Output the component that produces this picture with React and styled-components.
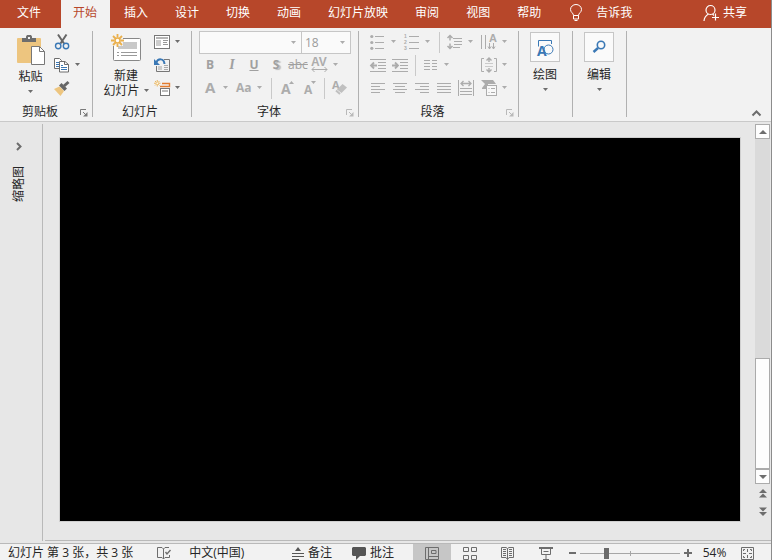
import React, { useState } from 'react'
import styled, { createGlobalStyle } from 'styled-components'

const accent = '#b7472a'
const blue = '#3a78b5'
const dark = '#6d6d6d'
const pale = '#acacac'

const GlobalStyle = createGlobalStyle`
    * {
        box-sizing: border-box;
    }
    body {
        margin: 0;
        font-family: "Open Sans", "Noto Sans CJK SC", sans-serif;
        font-size: 12px;
        line-height: 16px;
        color: #262626;
    }
    button, input, select {
        font: inherit;
        color: inherit;
        padding: 0;
        margin: 0;
        border: none;
        background: none;
    }
    svg {
        display: block;
        flex: none;
        overflow: visible;
    }
`

const Window = styled.div`
    display: flex;
    flex-direction: column;
    height: 100vh;
    overflow: hidden;
    background-color: #e7e7e7;
    border-right: 1px solid #8c8c8c;
`

/* tabs */
const TabBar = styled.nav`
    display: flex;
    flex: none;
    height: 28px;
    background-color: ${accent};
`
const Tab = styled.button`
    height: 28px;
    padding: 0 13px 3px ${({ $active }) => ($active ? 12 : 13)}px;
    margin-left: ${({ $active }) => ($active ? 1 : 0)}px;
    margin-right: 1px;
    white-space: nowrap;
    color: ${({ $active }) => ($active ? accent : '#fff')};
    background-color: ${({ $active }) => ($active ? '#f2f2f2' : 'transparent')};
`
const FileTab = styled(Tab)`
    padding: 0 19px 3px 17px;
    margin-right: 0;
`
const TabAction = styled(Tab)`
    display: flex;
    align-items: center;
    gap: ${({ $gap }) => $gap}px;
    padding-left: 15px;
`
const ShareTab = styled(TabAction)`
    margin-left: auto;
    padding-right: 23px;
`

/* ribbon */
const RibbonBar = styled.div`
    display: flex;
    flex: none;
    padding: 3px 0 4px;
    background-color: #f2f2f2;
    border-bottom: 1px solid #c9c9c9;
`
const Group = styled.section`
    display: flex;
    flex-direction: column;
    height: 86px;
    border-right: 1px solid #b1b1b1;
`
const GroupBody = styled.div`
    display: flex;
    flex: 1;
    padding: 0 ${({ $right = 7 }) => $right}px 0 ${({ $left = 7 }) => $left}px;
`
const GroupFoot = styled.div`
    display: flex;
    align-items: flex-end;
    height: 14px;
    padding-right: 4px;
`
const GroupLabel = styled.span`
    flex: 1;
    height: 14px;
    line-height: 18px;
    text-align: center;
`
const Rows = styled.div`
    display: flex;
    flex-direction: column;
`
const Row = styled.div`
    display: flex;
    align-items: center;
    height: 23px;
`
const Divider = styled.span`
    width: 1px;
    height: 21px;
    margin: 0 4px;
    background-color: #c9c9c9;
`
const Tool = styled.button`
    display: flex;
    align-items: center;
    gap: 5px;
    height: 22px;
    width: ${({ $drop }) => ($drop ? 34 : 22)}px;
    padding: 0 0 2px 3px;
    margin-left: ${({ $push }) => ($push ? 'auto' : 0)};
    color: ${({ disabled }) => (disabled ? pale : dark)};
`
const Letter = styled.button`
    width: 22px;
    height: 22px;
    padding-bottom: 2px;
    line-height: 20px;
    text-align: center;
    color: #a0a0a0;
    font-weight: ${({ $bold }) => ($bold ? 700 : 400)};
    font-style: ${({ $italic }) => ($italic ? 'italic' : 'normal')};
    font-family: ${({ $serif }) => ($serif ? '"Liberation Serif", serif' : 'inherit')};
    font-size: ${({ $size = 12 }) => $size}px;
    text-decoration: ${({ $line = 'none' }) => $line};
    text-shadow: ${({ $shadow }) => ($shadow ? '2px 1px 1px #bbb' : 'none')};
`
const BigTool = styled.button`
    display: flex;
    flex-direction: column;
    align-items: center;
    width: ${({ $width }) => $width}px;
    padding-top: ${({ $top = 4 }) => $top}px;
    line-height: 15px;

    > svg {
        margin-bottom: ${({ $gap = 3 }) => $gap}px;
    }
`
const CaretRow = styled.span`
    display: flex;
    align-items: center;
    justify-content: center;
    gap: 4px;
    height: 15px;
    white-space: nowrap;

    svg {
        color: ${dark};
    }
`
const IconFrame = styled.span`
    display: flex;
    align-items: center;
    justify-content: center;
    width: 30px;
    height: 30px;
    margin-bottom: 5px;
    border: 1px solid #c6c6c6;
    background-color: #fafafa;
`
const Combo = styled.div`
    display: flex;
    align-items: center;
    width: ${({ $width }) => $width}px;
    height: 23px;
    padding-right: 5px;
    margin-left: ${({ $joined }) => ($joined ? -1 : 0)}px;
    border: 1px solid #c6c6c6;
    background-color: #fafafa;
    color: ${pale};
`
const ComboInput = styled.input`
    flex: 1;
    min-width: 0;
    height: 21px;
    padding-left: 3px;
    color: #9a9a9a;
    outline: none;
`
const LauncherButton = styled.button`
    color: ${({ disabled }) => (disabled ? '#b9b9b9' : '#7a7a7a')};
`
const CollapseButton = styled.button`
    align-self: flex-end;
    margin: 0 10px 0 auto;
    color: ${dark};
`

/* work area */
const Workspace = styled.div`
    display: flex;
    flex: 1;
    min-height: 0;
`
const ThumbPane = styled.aside`
    display: flex;
    flex-direction: column;
    align-items: center;
    width: 43px;
    margin: 2px 0;
    padding: 18px 4px 0 0;
    border-right: 1px solid #b9b9b9;
`
const ExpandButton = styled.button`
    color: ${dark};
`
const ThumbTitle = styled.span`
    margin-top: 15px;
    writing-mode: vertical-rl;
    text-orientation: sideways;
    transform: rotate(180deg);
`
const Stage = styled.div`
    display: flex;
    flex: 1;
    margin: 0 0 2px 2px;
    border-bottom: 1px solid #b9b9b9;
`
const Slide = styled.main`
    flex: 1;
    margin: 16px 15px 19px;
    background-color: #000;
    outline: 1px solid #cfcfcf;
`
const ScrollColumn = styled.div`
    display: flex;
    flex-direction: column;
    width: 15px;
    margin: 2px 1px 20px 0;
`
const ScrollButton = styled.button`
    display: flex;
    align-items: center;
    justify-content: center;
    height: 15px;
    color: ${dark};
    border: 1px solid #ababab;
    background-color: #fdfdfd;
`
const PageButton = styled.button`
    display: flex;
    align-items: center;
    justify-content: center;
    height: 18px;
    color: ${dark};
`
const Track = styled.div`
    flex: 2;
    background-color: #dadada;
`
const Thumb = styled.div`
    flex: 1;
    border: 1px solid #ababab;
    background-color: #fdfdfd;
`

/* status bar */
const StatusBar = styled.footer`
    display: flex;
    flex: none;
    align-items: center;
    height: 17px;
    padding: 2px 17px 0 8px;
    border-top: 1px solid #b9b9b9;
    background-color: #f2f2f2;
    white-space: nowrap;
`
const StatusButton = styled.button`
    display: flex;
    align-items: center;
    gap: 4px;
    height: 16px;
    margin-left: ${({ $space = 18 }) => $space}px;
    color: inherit;
`
const StatusRight = styled.div`
    display: flex;
    align-items: center;
    margin-left: auto;
`
const ViewButton = styled.button`
    display: flex;
    align-items: center;
    justify-content: center;
    width: 38px;
    height: 18px;
    color: ${dark};
    background-color: ${({ $active }) => ($active ? '#c6c6c6' : 'transparent')};
`
const Views = styled.div`
    display: flex;
    margin-left: 19px;
`
const StepButton = styled(ViewButton)`
    width: 15px;
`
const ZoomSlider = styled.input`
    appearance: none;
    width: 100px;
    height: 12px;
    background:
        linear-gradient(#a6a6a6, #a6a6a6) center / 100% 1px no-repeat,
        linear-gradient(#a6a6a6, #a6a6a6) center / 1px 5px no-repeat;

    &::-webkit-slider-thumb {
        appearance: none;
        width: 5px;
        height: 11px;
        background-color: #6a6a6a;
    }
`
const ZoomValue = styled.button`
    width: 39px;
    margin-right: 7px;
    text-align: center;
`
const FitButton = styled.button`
    color: ${dark};
`

const Icon = ({ w = 16, h = w, children }) => (
    <svg width={w} height={h} viewBox={`0 0 ${w} ${h}`} fill="none" stroke="currentColor" aria-hidden="true">
        {children}
    </svg>
)

const Caret = ({ up, w = 5, h = 3 }) => (
    <svg width={w} height={h} viewBox="0 0 6 3" preserveAspectRatio="none" fill="currentColor" aria-hidden="true">
        <path d={up ? 'M0 3h6L3 0z' : 'M0 0h6L3 3z'} />
    </svg>
)

const Glyph = ({ x, y, size, fill = 'currentColor', bold, family, children }) => (
    <text x={x} y={y} fontSize={size} fontFamily={family} fontWeight={bold ? 700 : 400} fill={fill} stroke="none">
        {children}
    </text>
)

const BulbIcon = () => (
    <Icon w={12} h={17}>
        <path d="M3.500 11.500c0-2.500-3-3-3-6a5.500 5 0 0 1 11 0c0 3-3 3.500-3 6zM3.500 11.500v3.500h5v-3.500M4.500 16.500h3" stroke="#fff" />
    </Icon>
)

const ShareIcon = () => (
    <Icon w={16} h={18}>
        <g stroke="#fff" strokeWidth="1.2">
            <circle cx="7.500" cy="6" r="4.500" />
            <path d="M1 17c.2-3.500 2-5.500 4.500-7M9.500 10l1.500 1.500M12.500 9.500v7M9 13.500h7" />
        </g>
    </Icon>
)

const PasteIcon = () => (
    <Icon w={28} h={31}>
        <rect x="0" y="3" width="24" height="25" rx="1" fill="#edc57f" stroke="none" />
        <path d="M5 7V3h4V1.500L10 0h4l1 1.500V3h4v4z" fill="#6d6d6d" stroke="none" />
        <rect x="11" y="2" width="2" height="2" fill="#f2f2f2" stroke="none" />
        <path d="M14.500 11.500h8l5 5v13h-13z" fill="#fff" stroke="#777" />
        <path d="M22.500 11.500v5h5" stroke="#777" />
    </Icon>
)

const CutIcon = () => (
    <Icon>
        <path d="M4 .5l6 9M12.500 .5L6.500 9.500" stroke="#666" strokeWidth="2" />
        <circle cx="4.200" cy="12" r="2.700" stroke={blue} strokeWidth="1.400" />
        <circle cx="12" cy="12" r="2.700" stroke={blue} strokeWidth="1.400" />
    </Icon>
)

const CopyIcon = () => (
    <Icon>
        <path d="M.5 1.500h5l2 2v8h-7z" fill="#fff" />
        <path d="M2 5.500h3M2 7.500h3M2 9.500h3" stroke={blue} />
        <path d="M5.500 4.500h5.500l3.500 3v7.500h-9z" fill="#fff" />
        <path d="M10.500 4.500v3h4" />
        <path d="M7 8.500h2M7 10.500h6M7 12.500h6" stroke={blue} />
    </Icon>
)

const BrushIcon = () => (
    <Icon>
        <path d="M0 9l5.500-2.500 4.500 4.500-3.500 5z" fill="#edc57f" stroke="none" />
        <path d="M5 5.500L7.500 3l5.500 5.500-2.500 2.500z" fill="#666" stroke="none" />
        <path d="M10 6l4.500-4" stroke="#666" strokeWidth="3" />
    </Icon>
)

const Spark = () => (
    <g stroke="#eab04d">
        <path d="M6.500 0v3.500M6.500 9.500V13M0 6.500h3.500M9.500 6.500H13M2 2l2.500 2.500M8.500 8.500L11 11M11 2L8.500 4.500M4.500 8.500L2 11" strokeWidth="1.800" />
        <circle cx="6.500" cy="6.500" r="2.500" fill="#fff" strokeWidth="1.500" />
    </g>
)

const NewSlideIcon = () => (
    <Icon w={30} h={28}>
        <rect x="2.500" y="4.500" width="27" height="22" rx="1" fill="#fff" stroke="#888" />
        <rect x="7" y="8" width="19" height="7" fill="#c9c9c9" stroke="none" />
        <path d="M6 18.500h2M10 18.500h16M6 21.500h2M10 21.500h16" stroke="#999" />
        <path d="M0 0h12v12H0z" fill="#f2f2f2" stroke="none" />
        <Spark />
    </Icon>
)

const LayoutIcon = () => (
    <Icon>
        <rect x=".5" y="1.500" width="15" height="13" fill="#fff" stroke="#777" />
        <path d="M2 4h12" stroke="#b5b5b5" strokeWidth="2" />
        <rect x="2" y="6" width="5" height="6" fill="#ccc" stroke="none" />
        <path d="M9 6.500h5M9 8.500h4M9 10.500h5" stroke="#999" />
    </Icon>
)

const ResetIcon = () => (
    <Icon>
        <path d="M10 2.500h5.500v12H2.500V9" stroke="#777" />
        <rect x="4" y="9" width="4" height="4" fill="#ccc" stroke="none" />
        <path d="M10 8.500h4M10 10.500h4M10 12.500h4" stroke="#aaa" />
        <path d="M2 6c2-5 8-5 8.500 1" stroke={blue} strokeWidth="2" />
        <path d="M0 2v6h6z" fill={blue} stroke="none" />
    </Icon>
)

const SectionIcon = () => (
    <Icon>
        <path d="M8 3.500h7.500v3H6" stroke="#e27c30" strokeWidth="1.400" />
        <rect x="6.500" y="8.500" width="9" height="7" fill="#fff" stroke="#777" />
        <rect x="8" y="10" width="6" height="2" fill="#bbb" stroke="none" />
        <g transform="scale(.5)"><Spark /></g>
    </Icon>
)

const AvIcon = () => (
    <Icon>
        <Glyph x={-1} y={9} size={12} bold family="Liberation Sans">AV</Glyph>
        <path d="M0 12.500h15M2.500 10L0 12.500 2.500 15M12.500 10l2.500 2.500-2.500 2.500" />
    </Icon>
)

const ClearIcon = () => (
    <Icon>
        <Glyph x={0} y={9} size={11} bold>A</Glyph>
        <path d="M10.500 4L15 7.500 9.500 13 5 9.500z" fill="#c0c0c0" stroke="none" />
        <path d="M4 10.500l4 3.500" stroke="#c0c0c0" strokeWidth="2" />
    </Icon>
)

const BulletsIcon = () => (
    <Icon>
        <path d="M5 2.500h9M5 8.500h9M5 14.500h9" />
        <g fill="currentColor" stroke="none">
            <circle cx="1.800" cy="2.500" r="1.600" />
            <circle cx="1.800" cy="8.500" r="1.600" />
            <circle cx="1.800" cy="14.300" r="1.600" />
        </g>
    </Icon>
)

const NumberIcon = () => (
    <Icon>
        <path d="M5 2.500h10M5 8.500h10M5 14.500h10" />
        <Glyph x={0} y={4} size={5} bold family="Liberation Sans">1</Glyph>
        <Glyph x={0} y={10} size={5} bold family="Liberation Sans">2</Glyph>
        <Glyph x={0} y={16} size={5} bold family="Liberation Sans">3</Glyph>
    </Icon>
)

const LineSpacingIcon = () => (
    <Icon>
        <path d="M.5 4L3 1.500 5.500 4M3 1.500v5M.5 12L3 14.500 5.500 12M3 9.500v5" strokeWidth="1.500" />
        <path d="M6 4.500h9M7 7.500h8M7 10.500h8M6 13.500h7" />
    </Icon>
)

const DirectionIcon = () => (
    <Icon>
        <path d="M.5 1v14M4.500 1v14M8.500 9v6M12.500 9v6M7 12.500l1.500 2.500 1.500-2.500M11 12.500l1.500 2.500 1.500-2.500" />
        <Glyph x={8} y={8} size={11} bold family="Liberation Sans">A</Glyph>
    </Icon>
)

const IndentIcon = ({ out }) => (
    <Icon>
        <path d="M0 2.500h16M8 5.500h8M8 8.500h8M8 11.500h8M0 14.500h16" />
        <path d={out ? 'M7 8.500H1M4 5.500l-3 3 3 3' : 'M0 8.500h6M3 5.500l3 3-3 3'} strokeWidth="1.800" />
    </Icon>
)

const ColumnsIcon = () => (
    <Icon>
        <path d="M1 3.500h6M1 6.500h6M1 9.500h6M1 12.500h6M9 3.500h5M9 6.500h5M9 9.500h5M9 12.500h5" />
    </Icon>
)

const AnchorIcon = () => (
    <Icon>
        <path d="M3 1.500H.5v13H3M13 1.500h2.500v13H13" />
        <path d="M4 6.500h8M4 9.500h8" stroke="#cacaca" />
        <path d="M8 1v4M5.500 3.500L8 1l2.500 2.500M8 11v4M5.500 12.500L8 15l2.500-2.500" strokeWidth="1.400" />
    </Icon>
)

const alignPaths = {
    left: 'M1 3.500h14M1 6.500h9M1 9.500h14M1 12.500h9',
    center: 'M1 3.500h14M3 6.500h10M1 9.500h14M3 12.500h10',
    right: 'M1 3.500h14M6 6.500h9M1 9.500h14M6 12.500h9',
    justify: 'M1 3.500h14M1 6.500h14M1 9.500h14M1 12.500h14',
}
const AlignIcon = ({ type }) => <Icon><path d={alignPaths[type]} /></Icon>

const DistributeIcon = () => (
    <Icon>
        <path d="M.5 0v16M15.500 0v16M2 8.500h12M2 11.500h12M2 14.500h12" />
        <path d="M3 3.500h10M5.500 1L3 3.500 5.500 6M10.500 1L13 3.500 10.500 6" strokeWidth="1.300" />
    </Icon>
)

const SmartArtIcon = () => (
    <Icon>
        <path d="M0 0h12l3 4H7v5H1V8l3-4z" fill="currentColor" stroke="none" />
        <rect x="5.500" y="5.500" width="10" height="10" fill="#f8f8f8" />
        <path d="M7.500 8.500h1M10 8.500h4M7.500 12.500h1M10 12.500h4" />
    </Icon>
)

const DrawIcon = () => (
    <Icon w={17} h={17}>
        <path d="M1.500 7.500v-6h13V5" stroke={blue} />
        <circle cx="11.500" cy="10.500" r="4.500" stroke={blue} fill="#fafafa" />
        <Glyph x={0} y={17} size={14} fill={blue} bold>A</Glyph>
    </Icon>
)

const FindIcon = () => (
    <Icon w={14}>
        <circle cx="9" cy="5" r="3.700" stroke={blue} strokeWidth="1.600" />
        <path d="M6 8L1.500 12" stroke={blue} strokeWidth="2.400" />
    </Icon>
)

const LauncherIcon = () => (
    <Icon w={8}>
        <path d="M.5 6V.5H6M3 3l3 3" />
        <path d="M7.500 3v4.500H3z" fill="currentColor" stroke="none" />
    </Icon>
)

const DoubleArrow = ({ up }) => (
    <svg width="8" height="9" viewBox="0 0 8 9" fill="currentColor" aria-hidden="true">
        <path d={up ? 'M0 4h8L4 0zM0 8.500h8L4 4.500z' : 'M0 .5h8L4 4.500zM0 5h8L4 9z'} />
    </svg>
)

const SpellIcon = () => (
    <Icon w={14} h={13}>
        <g stroke={dark}>
            <path d="M6.500 12V2L5 .5H.5v10H5L6.500 12 8 10.500h4.500V8M6.500 2L8 .5h4" />
            <path d="M8.500 5l1.500 2 3.500-4" strokeWidth="1.400" />
        </g>
    </Icon>
)

const NotesIcon = () => (
    <Icon w={12} h={13}>
        <path d="M3 4l3-4 3 4z" fill="#555" stroke="none" />
        <path d="M0 6.500h12M0 9.500h12M0 12.500h7" stroke="#555" />
    </Icon>
)

const CommentIcon = () => (
    <Icon w={14} h={13}>
        <path d="M1 0h12l1 1v7l-1 1H8l-4 4V9H1L0 8V1z" fill="#555" stroke="none" />
    </Icon>
)

const NormalIcon = () => (
    <Icon w={14} h={13}>
        <path d="M.5.5h13v12H.5zM3.500.5v12M6.500 3.500h4.500v3H6.500zM3.500 9.500h10" />
    </Icon>
)

const SorterIcon = () => (
    <Icon w={14} h={13}>
        <path d="M.5.5h5v4h-5zM8.500.5h5v4h-5zM.5 8.500h5v4h-5zM8.500 8.500h5v4h-5z" />
    </Icon>
)

const ReadingIcon = () => (
    <Icon w={14} h={13}>
        <path d="M6.500 12.500V1.500L5 .5H.5v10H5l1.500 2 1.500-2h4.500V.5H8L6.500 1.500M2 2.500h3M2 4.500h3M2 6.500h3M2 8.500h3M8 2.500h3M8 4.500h3M8 6.500h3M8 8.500h3" />
    </Icon>
)

const ShowIcon = () => (
    <Icon w={14} h={13}>
        <path d="M0 1h14" strokeWidth="2" />
        <path d="M2.500 2v5.500h9V2M4.500 4.500h5M7 8v4M4 12.500h6" />
    </Icon>
)

const FitIcon = () => (
    <Icon w={13} h={13}>
        <path d="M.5.5h12v12H.5zM6.500 2v3M6.500 8v3M2 6.500h3M8 6.500h3M2.500 4V2.500H4M9 2.500h1.500V4M2.500 9v1.500H4M9 10.500h1.500V9" />
    </Icon>
)

const tabs = ['开始', '插入', '设计', '切换', '动画', '幻灯片放映', '审阅', '视图', '帮助']

function Tabs() {
    const [current, setCurrent] = useState('开始')
    return (
        <TabBar>
            <FileTab>文件</FileTab>
            {tabs.map((name) => (
                <Tab key={name} $active={name === current} onClick={() => setCurrent(name)}>{name}</Tab>
            ))}
            <TabAction $gap={14}><BulbIcon />告诉我</TabAction>
            <ShareTab $gap={4}><ShareIcon />共享</ShareTab>
        </TabBar>
    )
}

function Launcher({ label, disabled }) {
    return (
        <LauncherButton aria-label={label} disabled={disabled}><LauncherIcon /></LauncherButton>
    )
}

function ToolButton({ label, drop, push, disabled, children }) {
    return (
        <Tool aria-label={label} $drop={drop} $push={push} disabled={disabled}>
            {children}
            {drop && <Caret />}
        </Tool>
    )
}

function ClipboardGroup() {
    return (
        <Group>
            <GroupBody $left={10}>
                <BigTool $width={41}>
                    <PasteIcon />
                    <span>粘贴</span>
                    <CaretRow><Caret /></CaretRow>
                </BigTool>
                <Rows>
                    <Row><ToolButton label="剪切"><CutIcon /></ToolButton></Row>
                    <Row><ToolButton label="复制" drop><CopyIcon /></ToolButton></Row>
                    <Row><ToolButton label="格式刷"><BrushIcon /></ToolButton></Row>
                </Rows>
            </GroupBody>
            <GroupFoot>
                <GroupLabel>剪贴板</GroupLabel>
                <Launcher label="剪贴板选项" />
            </GroupFoot>
        </Group>
    )
}

function SlidesGroup() {
    return (
        <Group>
            <GroupBody $left={8} $right={6}>
                <BigTool $width={50} $top={3} $gap={6}>
                    <NewSlideIcon />
                    <CaretRow>新建</CaretRow>
                    <CaretRow>幻灯片<Caret /></CaretRow>
                </BigTool>
                <Rows>
                    <Row><ToolButton label="版式" drop><LayoutIcon /></ToolButton></Row>
                    <Row><ToolButton label="重置"><ResetIcon /></ToolButton></Row>
                    <Row><ToolButton label="节" drop><SectionIcon /></ToolButton></Row>
                </Rows>
            </GroupBody>
            <GroupFoot><GroupLabel>幻灯片</GroupLabel></GroupFoot>
        </Group>
    )
}

function FontGroup() {
    return (
        <Group>
            <GroupBody>
                <Rows>
                    <Row>
                        <Combo $width={103}>
                            <ComboInput aria-label="字体" disabled />
                            <Caret />
                        </Combo>
                        <Combo $width={50} $joined>
                            <ComboInput aria-label="字号" defaultValue="18" disabled />
                            <Caret />
                        </Combo>
                    </Row>
                    <Row>
                        <Letter $bold>B</Letter>
                        <Letter $bold $italic $serif $size={14}>I</Letter>
                        <Letter $bold $line="underline">U</Letter>
                        <Letter $bold $shadow>S</Letter>
                        <Letter $line="line-through">abc</Letter>
                        <ToolButton label="字符间距" drop disabled><AvIcon /></ToolButton>
                    </Row>
                    <Row>
                        <ToolButton label="字体颜色" drop disabled>
                            <Icon><Glyph x={3} y={13} size={15} bold>A</Glyph></Icon>
                        </ToolButton>
                        <ToolButton label="更改大小写" drop disabled>
                            <Icon><Glyph x={0} y={12} size={12} bold>Aa</Glyph></Icon>
                        </ToolButton>
                        <Divider />
                        <ToolButton label="增大字号" disabled>
                            <Icon>
                                <Glyph x={2} y={14} size={14} bold>A</Glyph>
                                <path d="M10 4h5l-2.500-3z" fill="currentColor" stroke="none" />
                            </Icon>
                        </ToolButton>
                        <ToolButton label="减小字号" disabled>
                            <Icon>
                                <Glyph x={3} y={14} size={12} bold>A</Glyph>
                                <path d="M10 1h5l-2.500 3z" fill="currentColor" stroke="none" />
                            </Icon>
                        </ToolButton>
                        <Divider />
                        <ToolButton label="清除格式" disabled><ClearIcon /></ToolButton>
                    </Row>
                </Rows>
            </GroupBody>
            <GroupFoot>
                <GroupLabel>字体</GroupLabel>
                <Launcher label="字体选项" disabled />
            </GroupFoot>
        </Group>
    )
}

function ParagraphGroup() {
    return (
        <Group>
            <GroupBody $left={8} $right={6}>
                <Rows>
                    <Row>
                        <ToolButton label="项目符号" drop disabled><BulletsIcon /></ToolButton>
                        <ToolButton label="编号" drop disabled><NumberIcon /></ToolButton>
                        <Divider />
                        <ToolButton label="行距" drop disabled><LineSpacingIcon /></ToolButton>
                        <ToolButton label="文字方向" drop push disabled><DirectionIcon /></ToolButton>
                    </Row>
                    <Row>
                        <ToolButton label="降低列表级别" disabled><IndentIcon out /></ToolButton>
                        <ToolButton label="提高列表级别" disabled><IndentIcon /></ToolButton>
                        <Divider />
                        <ToolButton label="分栏" drop disabled><ColumnsIcon /></ToolButton>
                        <ToolButton label="对齐文本" drop push disabled><AnchorIcon /></ToolButton>
                    </Row>
                    <Row>
                        <ToolButton label="左对齐" disabled><AlignIcon type="left" /></ToolButton>
                        <ToolButton label="居中" disabled><AlignIcon type="center" /></ToolButton>
                        <ToolButton label="右对齐" disabled><AlignIcon type="right" /></ToolButton>
                        <ToolButton label="两端对齐" disabled><AlignIcon type="justify" /></ToolButton>
                        <ToolButton label="分散对齐" disabled><DistributeIcon /></ToolButton>
                        <ToolButton label="转换为 SmartArt" drop push disabled><SmartArtIcon /></ToolButton>
                    </Row>
                </Rows>
            </GroupBody>
            <GroupFoot>
                <GroupLabel>段落</GroupLabel>
                <Launcher label="段落选项" disabled />
            </GroupFoot>
        </Group>
    )
}

function MenuGroup({ name, children }) {
    return (
        <Group>
            <GroupBody $left={6}>
                <BigTool $width={40} $top={1}>
                    <IconFrame>{children}</IconFrame>
                    <span>{name}</span>
                    <CaretRow><Caret /></CaretRow>
                </BigTool>
            </GroupBody>
        </Group>
    )
}

function Ribbon() {
    return (
        <RibbonBar>
            <ClipboardGroup />
            <SlidesGroup />
            <FontGroup />
            <ParagraphGroup />
            <MenuGroup name="绘图"><DrawIcon /></MenuGroup>
            <MenuGroup name="编辑"><FindIcon /></MenuGroup>
            <CollapseButton aria-label="折叠功能区">
                <Icon w={9} h={7}><path d="M.5 5.500l4-4 4 4" strokeWidth="2" /></Icon>
            </CollapseButton>
        </RibbonBar>
    )
}

function Scroller() {
    return (
        <ScrollColumn>
            <ScrollButton aria-label="向上滚动"><Caret up w={8} h={4} /></ScrollButton>
            <Track />
            <Thumb />
            <ScrollButton aria-label="向下滚动"><Caret w={8} h={4} /></ScrollButton>
            <PageButton aria-label="上一张幻灯片"><DoubleArrow up /></PageButton>
            <PageButton aria-label="下一张幻灯片"><DoubleArrow /></PageButton>
        </ScrollColumn>
    )
}

function Status() {
    const [zoom, setZoom] = useState(25)
    return (
        <StatusBar>
            <span>幻灯片 第 3 张，共 3 张</span>
            <StatusButton aria-label="拼写检查" $space={24}><SpellIcon /></StatusButton>
            <StatusButton>中文(中国)</StatusButton>
            <StatusRight>
                <StatusButton><NotesIcon />备注</StatusButton>
                <StatusButton $space={20}><CommentIcon />批注</StatusButton>
                <Views>
                    <ViewButton aria-label="普通视图" $active><NormalIcon /></ViewButton>
                    <ViewButton aria-label="幻灯片浏览"><SorterIcon /></ViewButton>
                    <ViewButton aria-label="阅读视图"><ReadingIcon /></ViewButton>
                    <ViewButton aria-label="幻灯片放映"><ShowIcon /></ViewButton>
                </Views>
                <StepButton aria-label="缩小">
                    <Icon w={7} h={8}><path d="M0 4h7" strokeWidth="2" /></Icon>
                </StepButton>
                <ZoomSlider
                    type="range"
                    aria-label="缩放"
                    value={zoom}
                    onChange={(e) => setZoom(Number(e.target.value))}
                />
                <StepButton aria-label="放大">
                    <Icon w={8}><path d="M0 4h8M4 0v8" strokeWidth="2" /></Icon>
                </StepButton>
                <ZoomValue>54%</ZoomValue>
                <FitButton aria-label="适应窗口"><FitIcon /></FitButton>
            </StatusRight>
        </StatusBar>
    )
}

function App() {
    return (
        <Window>
            <GlobalStyle />
            <Tabs />
            <Ribbon />
            <Workspace>
                <ThumbPane>
                    <ExpandButton aria-label="展开缩略图">
                        <Icon w={6} h={9}><path d="M1 1l3.500 3.500L1 8" strokeWidth="2" /></Icon>
                    </ExpandButton>
                    <ThumbTitle>缩略图</ThumbTitle>
                </ThumbPane>
                <Stage>
                    <Slide />
                    <Scroller />
                </Stage>
            </Workspace>
            <Status />
        </Window>
    )
}

export default App
